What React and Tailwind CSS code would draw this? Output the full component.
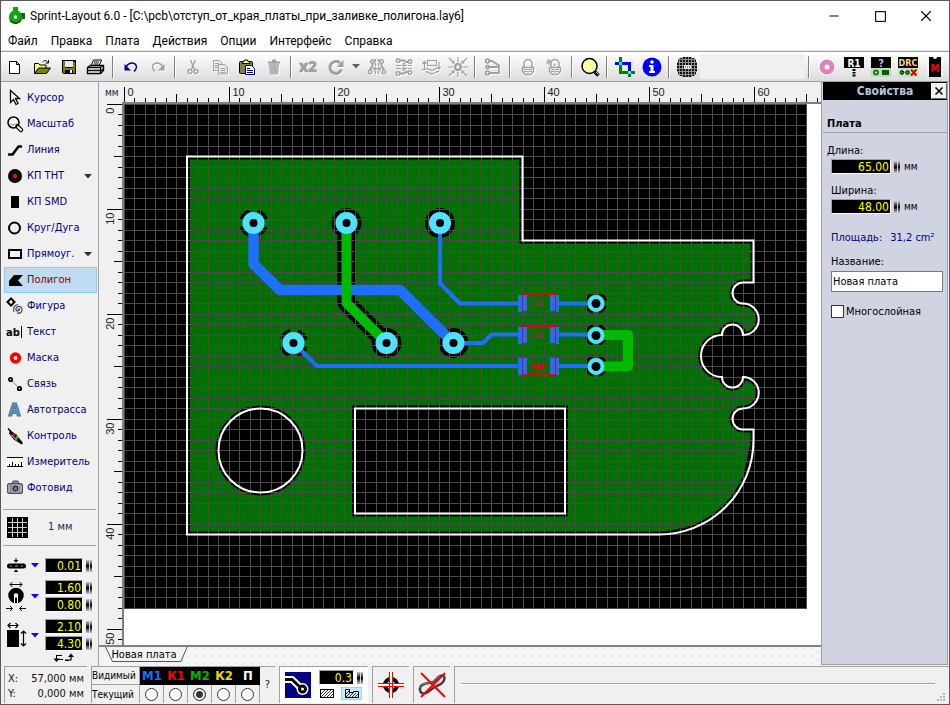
import React, { useState } from "react";
import { Minus, Square, X } from "lucide-react";

const STEP = 10.5; // pixels per mm on the board
const TAHOMA = "'DejaVu Sans Condensed', sans-serif";

const Svg = ({ children, w = 20, h = 20, className = "" }) => (
  <svg width={w} height={h} viewBox={`0 0 ${w} ${h}`} fill="none" className={`block shrink-0 ${className}`}>
    {children}
  </svg>
);

// Toolbar icons, 20x20
const toolIcons = {
  new: <path d="M4.5 4.5h7l3 3v9h-10zM11.5 4.5v3h3" stroke="#000" fill="#fff" />,
  open: (
    <>
      <path d="M2.500 16V6.500h4l1.500 1.500h6v3" fill="#ffff66" stroke="#000" />
      <path d="M2.500 16.500l4-5.500h12l-4 5.500z" fill="#808000" stroke="#000" />
      <path d="M10.500 5c2-2 4-2 5.500 0.500M16.500 3v3h-3" stroke="#000" />
    </>
  ),
  save: (
    <g shapeRendering="crispEdges">
      <path d="M3 3h14v14H4l-1-1z" fill="#000" />
      <path d="M4 4h2v7h8V5h2v11h-2v-3H6v3H4z" fill="#808000" />
      <path d="M6 4h8v6H6z" fill="#e8e8e8" />
      <path d="M11 13h2v3h-2z" fill="#fff" />
    </g>
  ),
  print: (
    <>
      <path d="M5 9l2.500-6h8L13 9" fill="#fff" stroke="#000" />
      <path d="M8 5h5M7.500 7h5" stroke="#000" />
      <path d="M1.500 10.500l3-2h13v5l-3 3h-13z" fill="#fff" stroke="#000" strokeWidth="1.400" />
      <path d="M1.500 10.500h13v6M14.500 10.500l3-2M2 13.500h12M14.500 14.500l3-3" stroke="#000" strokeWidth="1.300" />
      <path d="M8 12h4" stroke="#c8b400" />
    </>
  ),
  undo: (
    <>
      <path d="M5 10c3-5 8-5 10-2 1.500 3-0.500 5-2 6.500" stroke="#000080" strokeWidth="1.400" />
      <path d="M3.500 7v6.500h6.500z" fill="#000080" />
    </>
  ),
  redo: (
    <>
      <path d="M15 10c-3-5-8-5-10-2-1.500 3 0.500 5 2 6.500" stroke="#a0a0a0" strokeWidth="1.400" />
      <path d="M16.500 7v6.500h-6.500z" fill="#a0a0a0" />
    </>
  ),
  cut: (
    <g stroke="#a0a0a0" strokeWidth="1.400">
      <path d="M7.500 3l4 9.500M12.500 3L8.500 12.500" />
      <circle cx="7" cy="14.500" r="2" />
      <circle cx="13" cy="14.500" r="2" />
    </g>
  ),
  copy: (
    <g stroke="#a0a0a0" fill="#ececec">
      <path d="M3.500 3.500h6l2 2v8h-8zM5 6.500h4M5 8.500h4M5 10.500h3" />
      <path d="M8.500 7.500h6l3 2.500v7h-9zM10.500 11.500h5M10.500 13.500h5M10.500 15.500h5" />
    </g>
  ),
  paste: (
    <>
      <rect x="2.500" y="4.500" width="13" height="12" rx="1" fill="#808040" stroke="#000" />
      <path d="M5 6.500h8L11.500 4h-1V3h-3v1h-1z" fill="#ffff66" stroke="#000" />
      <path d="M8.500 8.500h6l3 3v6h-9z" fill="#fff" stroke="#000080" />
      <path d="M10 11.500h3M10 13.500h6M10 15.500h6" stroke="#000080" />
    </>
  ),
  trash: (
    <g stroke="#a0a0a0">
      <path d="M4 5.500h12M8 3.500h4" strokeWidth="2" />
      <path d="M5.500 7h9l-1 10h-7z" fill="#d4d4d4" />
      <path d="M8 8v8M10 8v8M12 8v8" strokeWidth="1.300" />
    </g>
  ),
  x2: (
    <text x="9" y="15" textAnchor="middle" fontSize="15" fontWeight="800" fill="#a0a0a0" stroke="#a0a0a0" strokeWidth="0.500" fontFamily="'Open Sans', sans-serif">
      x2
    </text>
  ),
  rotate: (
    <>
      <path d="M14 6a6 6 0 1 0 1.500 6.500" stroke="#a0a0a0" strokeWidth="3" />
      <path d="M17.500 3v7h-7z" fill="#a0a0a0" />
    </>
  ),
  mirrorH: (
    <g stroke="#a0a0a0" strokeWidth="1.400">
      <path d="M8.500 2v16M11.500 2v16" strokeDasharray="3 1" />
      <path d="M5.500 6.500v3l-2 2v2M14.500 6.500v3l2 2v2" strokeWidth="2" />
      <circle cx="5.500" cy="4.500" r="1.800" />
      <circle cx="14.500" cy="4.500" r="1.800" />
      <circle cx="3" cy="15" r="1.800" />
      <circle cx="17" cy="15" r="1.800" />
      <path d="M6 12h8M8 10l-2 2 2 2M12 10l2 2-2 2" strokeWidth="1" />
    </g>
  ),
  mirrorV: (
    <g stroke="#a0a0a0" strokeWidth="1.400">
      <path d="M2 8.500h16M2 11.500h16" strokeDasharray="5 1" strokeWidth="1" />
      <path d="M6 3.500h4l2 1.500h3M6 16.500h4l2-1.500h3" strokeWidth="2" />
      <circle cx="4" cy="3.500" r="1.800" />
      <circle cx="16" cy="4.500" r="1.800" />
      <circle cx="4" cy="16.500" r="1.800" />
      <circle cx="16" cy="15.500" r="1.800" />
      <path d="M10 6v8M8.500 7.500L10 6l1.500 1.500M8.500 12.500L10 14l1.500-1.500" strokeWidth="1" />
    </g>
  ),
  flip: (
    <g stroke="#a0a0a0" strokeWidth="1.200">
      <rect x="6.500" y="3.500" width="9" height="5" />
      <path d="M3.500 12.500V4.500M1.500 6.500l2-2 2 2M18 5v6.500M16 10l2 2 2-2" />
      <path d="M5 11l6 2.500 5-2.500M5 14.500l6 2.500 6-2.500" />
      <path d="M1 12.500h4M15 14.500h3" />
    </g>
  ),
  snap: (
    <g stroke="#a0a0a0" strokeWidth="1.200">
      <circle cx="10" cy="10" r="3" strokeWidth="2.400" />
      <path d="M10 0v5M10 15v5M0 10h5M15 10h5M1 1l5 5M19 1l-5 5M1 19l5-5M19 19l-5-5" />
      <path d="M3.500 6H6V3.500M16.500 6H14V3.500M3.500 14H6v2.500M16.500 14H14v2.500" />
    </g>
  ),
  connect: (
    <g stroke="#a0a0a0" strokeWidth="1.800">
      <circle cx="4.500" cy="4" r="1.800" />
      <circle cx="4.500" cy="10" r="1.500" />
      <circle cx="4.500" cy="16" r="1.800" />
      <path d="M6.500 4h2.500l7 4.500v7.500H6.500M6 10h10" />
    </g>
  ),
  lock: (
    <g stroke="#a0a0a0" strokeWidth="1.500">
      <path d="M6 10V6.500a4 4 0 0 1 8 0V10" />
      <path d="M4.500 10.500h11v4l-3 3h-5l-3-3z" />
      <path d="M6 12.500h3M11 12.500h3M6 14.500h3M11 14.500h3M10 12v4" strokeWidth="1" />
    </g>
  ),
  lockNew: (
    <g stroke="#a0a0a0" strokeWidth="1.500">
      <path d="M6 10V6.500a4 4 0 0 1 8 0V10M9.500 9V7" />
      <path d="M4.500 10.500h11v4l-3 3h-5l-3-3z" />
      <path d="M6 12.500h3M11 12.500h3M6 14.500h3M11 14.500h3M10 12v4" strokeWidth="1" />
      <path d="M1 5h6M4 2v6M2 3l4 4M6 3L2 7" strokeWidth="1" />
    </g>
  ),
  zoom: (
    <>
      <circle cx="9.500" cy="9" r="7.500" fill="#ffffa0" stroke="#000" strokeWidth="1.500" />
      <path d="M14.500 14.500l4 4" stroke="#000" strokeWidth="3.500" />
      <path d="M16 15l2.500 2.500" stroke="#fff" strokeWidth="0.800" />
    </>
  ),
  crop: (
    <g strokeWidth="3" shapeRendering="crispEdges">
      <path d="M5.500 0v15.500h9" stroke="#008000" />
      <path d="M0 6.500h14.500v9" stroke="#0000ff" />
      <path d="M14.500 14v6M16 15.500h4" stroke="#008000" />
      <path d="M4 6.500h3M13 15.500h3" stroke="#00ffff" />
    </g>
  ),
  info: (
    <>
      <circle cx="10" cy="10" r="9.500" fill="#0000ff" />
      <circle cx="10" cy="5" r="1.800" fill="#fff" />
      <path d="M7 8h4.500v6H13v2H7v-2h1.500v-4H7z" fill="#fff" />
    </>
  ),
  photo: (
    <g shapeRendering="crispEdges">
      <path d="M5 0h10v1h2v2h2v2h1v10h-1v2h-2v2h-2v1H5v-1H3v-2H1v-2H0V5h1V3h2V1h2z" fill="#101010" />
      <path
        d="M2.500 1v18M5.500 0v20M8.500 0v20M11.500 0v20M14.500 0v20M17.500 1v18M1 2.500h18M0 5.500h20M0 8.500h20M0 11.500h20M0 14.500h20M1 17.500h18"
        stroke="#909090"
      />
      <path d="M7 8h7v4H7z" fill="#e8e8e8" />
      <path d="M8 10h5" stroke="#888" strokeWidth="2" strokeDasharray="1 1" />
    </g>
  ),
  pad: (
    <>
      <circle cx="10" cy="10" r="8.500" fill="#fff" />
      <circle cx="10" cy="10" r="5" stroke="#e080c0" strokeWidth="5" />
    </>
  ),
  r1: (
    <>
      <rect x="0" y="0" width="20" height="11" fill="#000" />
      <text x="10" y="9.500" textAnchor="middle" fontSize="10" fontWeight="700" fill="#fff" fontFamily={TAHOMA}>
        R1
      </text>
      <path d="M8.500 12h3v2h-3zM8.500 15h3v1.500h-3zM8.500 17.500h3v2h-3z" fill="#000" />
    </>
  ),
  ask: (
    <>
      <rect width="20" height="20" fill="#b8dcb8" />
      <rect width="20" height="11" fill="#000" />
      <text x="10" y="9.500" textAnchor="middle" fontSize="11" fontWeight="700" fill="#a8c8ff" fontFamily={TAHOMA}>
        ?
      </text>
      <circle cx="5" cy="15.500" r="2" stroke="#006000" strokeWidth="1.500" />
      <rect x="11" y="13" width="7" height="5" fill="#006000" />
    </>
  ),
  drc: (
    <>
      <rect width="20" height="20" fill="#c8e0c0" />
      <rect width="20" height="11" fill="#000" />
      <text x="10" y="9" textAnchor="middle" fontSize="9" fontWeight="700" fill="#ffd890" fontFamily={TAHOMA}>
        DRC
      </text>
      <circle cx="4" cy="15.500" r="1.800" fill="#00c000" stroke="#000" />
      <circle cx="9.500" cy="15.500" r="1.800" fill="#00c000" stroke="#000" />
      <path d="M13 12.500l5.500 6M18.500 12.500l-5.500 6" stroke="#e00000" strokeWidth="2" />
    </>
  ),
  macro: (
    <>
      <path d="M3.500 0v20M16.500 0v20" stroke="#fff" strokeWidth="3" strokeDasharray="2 2" />
      <path d="M4 0h4a2 2 0 0 0 4 0h4v20H4z" fill="#000" />
      <text x="10" y="14.500" textAnchor="middle" fontSize="10" fontWeight="700" fill="#ff0000" fontFamily={TAHOMA}>
        M
      </text>
    </>
  ),
};

// null is a separator
const toolbar = [
  ["new", "Новый"],
  ["open", "Открыть"],
  ["save", "Сохранить"],
  ["print", "Печать"],
  null,
  ["undo", "Отменить"],
  ["redo", "Вернуть", true],
  null,
  ["cut", "Вырезать", true],
  ["copy", "Копировать", true],
  ["paste", "Вставить"],
  ["trash", "Удалить", true],
  null,
  ["x2", "Дублировать", true],
  ["rotate", "Повернуть", true],
  ["arrow", "Угол поворота", true],
  ["mirrorH", "Зеркально по горизонтали", true],
  ["mirrorV", "Зеркально по вертикали", true],
  ["flip", "На другую сторону", true],
  ["snap", "Привязка к сетке", true],
  null,
  ["connect", "Соединения", true],
  null,
  ["lock", "Группировать", true],
  ["lockNew", "Разгруппировать", true],
  null,
  ["zoom", "Масштаб"],
  null,
  ["crop", "Шаблон"],
  ["info", "Информация"],
  null,
  ["photo", "Прозрачность"],
];

const rightTools = [
  ["pad", "Металлизация"],
  ["r1", "Компоненты"],
  ["ask", "Свойства"],
  ["drc", "Проверка DRC"],
  ["macro", "Макросы"],
];

// Left panel tools
const tools = [
  ["Курсор", <path d="M5.500 2.500v12l3-3 2.500 5 2-1-2.500-5h4z" fill="#fff" stroke="#000" strokeWidth="1.300" />],
  [
    "Масштаб",
    <>
      <circle cx="8.500" cy="8.500" r="5.500" fill="#f8f8f8" stroke="#000" strokeWidth="1.500" />
      <path d="M5 9.500c2 2 5 2 7 0" stroke="#aaa" strokeWidth="1.500" />
      <path d="M12.500 12.500l3.500 3.500" stroke="#000" strokeWidth="4.500" strokeLinecap="round" />
      <path d="M13 13l3 3" stroke="#fff" strokeWidth="2" strokeLinecap="round" />
    </>,
  ],
  ["Линия", <path d="M4 14.500h3.500l6-8H16" stroke="#000" strokeWidth="2.500" strokeLinecap="round" strokeLinejoin="round" />],
  [
    "КП THT",
    <>
      <circle cx="10" cy="10" r="7" fill="#000" />
      <circle cx="10" cy="10" r="2.200" fill="#f00" />
    </>,
    true,
  ],
  ["КП SMD", <rect x="6" y="4" width="8" height="12" fill="#000" />],
  ["Круг/Дуга", <circle cx="9.500" cy="10" r="5.500" stroke="#000" strokeWidth="2" />],
  ["Прямоуг.", <rect x="4" y="6" width="12" height="8" stroke="#000" strokeWidth="2" shapeRendering="crispEdges" />, true],
  ["Полигон", <path d="M4 16v-5l5-6h9l-5 5.500 5 5.500z" fill="#000" />],
  [
    "Фигура",
    <>
      <path d="M6 2.500l3.500 3.500L6 9.500 2.500 6z" fill="#fff" stroke="#000" strokeWidth="2" />
      <path
        d="M13 13.500c0-1 1.500-1 1.500 0s-2 2-3 1-1-3.500 1.500-4 4.500 1.500 4 4-3 3-5 2.500M9 16c-1-3-0.500-7 4-7.500"
        stroke="#3c3c50"
        strokeWidth="1.200"
      />
    </>,
  ],
  [
    "Текст",
    <>
      <text x="8" y="14" textAnchor="middle" fontSize="11" fontWeight="700" fill="#000" fontFamily={TAHOMA}>
        ab
      </text>
      <path d="M16.500 4v12" stroke="#000" />
    </>,
  ],
  ["Маска", <circle cx="10.500" cy="10" r="3.800" fill="#fff" stroke="#f00" strokeWidth="3.800" />],
  [
    "Связь",
    <>
      <path d="M5.500 5.500l9 9" stroke="#888" />
      <circle cx="5.500" cy="5.500" r="1.700" fill="#fff" stroke="#000" strokeWidth="1.800" />
      <circle cx="14.500" cy="14.500" r="1.700" fill="#fff" stroke="#000" strokeWidth="1.800" />
    </>,
  ],
  [
    "Автотрасса",
    <text x="9.500" y="16" textAnchor="middle" fontSize="17" fontWeight="700" fill="#5f9bc4" stroke="#4d7a9c" strokeWidth="1.200" fontFamily={TAHOMA}>
      A
    </text>,
  ],
  [
    "Контроль",
    <>
      <path d="M3 2.500l3 3" stroke="#000" strokeWidth="1.500" />
      <path d="M5.500 6l5 3.500 6 7.500-7-4.500-4-5z" fill="#000" stroke="#000" strokeWidth="2.500" strokeLinejoin="round" />
      <path d="M6 8.500l6 6" stroke="#fff" />
      <circle cx="9" cy="8.500" r="1.400" fill="#f00" />
      <circle cx="12" cy="11.500" r="1.400" fill="#0d0" />
    </>,
  ],
  [
    "Измеритель",
    <g shapeRendering="crispEdges">
      <rect x="2" y="5" width="16" height="10" fill="#fff" />
      <path d="M2 5.500h16M2 14.500h16M4.500 12v2M7.500 10v4M10.500 12v2M13.500 12v2M16.500 10v4" stroke="#000" />
    </g>,
  ],
  [
    "Фотовид",
    <>
      <path d="M7 6l1-3h5l1 3" fill="#8a8f96" stroke="#555" />
      <rect x="2.500" y="5.500" width="15" height="10" rx="1.500" fill="#858b93" stroke="#4a4e55" />
      <path d="M4 7v7M16 7v7" stroke="#b8b0a0" strokeWidth="1.500" />
      <circle cx="10.500" cy="10.500" r="3.800" fill="#30343c" stroke="#c8ccd4" />
      <circle cx="10.500" cy="10.500" r="1.500" fill="#6a90c0" />
    </>,
  ],
];

const layers = [
  ["М1", "text-[#1e6eff]"],
  ["К1", "text-[#ff0000]"],
  ["М2", "text-[#00b400]"],
  ["К2", "text-[#e6dc00]"],
  ["П", "text-white"],
];

const Sep = () => <span className="mx-[3px] h-[22px] w-0.5 shrink-0 border-l border-[#808080] bg-white" />;

const Down = ({ color = "#333" }) => (
  <Svg w={8} h={5}>
    <path d="M0 0h8L4 4.500z" fill={color} />
  </Svg>
);

const Grip = () => (
  <Svg w={6} h={12}>
    <linearGradient id="grip" x1="0" y1="0" x2="0" y2="1">
      <stop offset="0" stopColor="#c8c8c8" />
      <stop offset="0.500" stopColor="#000" />
      <stop offset="1" stopColor="#c8c8c8" />
    </linearGradient>
    <rect x="0" y="0" width="3" height="12" fill="url(#grip)" />
    <rect x="3" y="0" width="1" height="12" fill="#d8d8e0" />
    <rect x="4" y="0" width="2" height="12" fill="url(#grip)" />
  </Svg>
);

const NumberField = ({ label, id, value, className = "w-[38px]" }) => (
  <div className="flex items-center gap-[3px]">
    <input
      id={id}
      aria-label={label}
      defaultValue={value}
      className={`h-[15px] border border-[#a0a0a0] border-r-white border-b-white bg-black pr-px text-right text-xs leading-3 text-[#ffff00] outline-none ${className}`}
    />
    <Grip />
  </div>
);

const ToolButton = ({ id, label, disabled }) => (
  <button
    type="button"
    aria-label={label}
    title={label}
    disabled={disabled}
    className={`flex h-7 shrink-0 items-center justify-center ${id === "arrow" ? "w-[14px]" : "w-[27px]"}`}
  >
    {id === "arrow" ? <Down color="#606060" /> : <Svg className={disabled ? "drop-shadow-[1px_1px_0_white]" : ""}>{toolIcons[id]}</Svg>}
  </button>
);

const marks = (count) => Array.from({ length: count }, (_, i) => ({ i, pos: Math.floor(i * STEP) + 0.5 }));
const tickSize = (i) => (i % 10 === 0 ? 15 : i % 5 === 0 ? 8 : 4);

function TopRuler() {
  return (
    <svg width="696" height="20" className="block" fontSize="11" fontFamily="'Liberation Sans', sans-serif">
      {marks(67).map(({ i, pos }) => (
        <g key={i}>
          <path d={`M${pos} ${20 - tickSize(i)}V20`} stroke="#000" />
          {i % 10 === 0 && (
            <text x={pos + 3} y="14" fill="#1a1a1a">
              {i}
            </text>
          )}
        </g>
      ))}
    </svg>
  );
}

function SideRuler() {
  return (
    <svg width="23" height="541" className="block" fontSize="11" fontFamily="'Liberation Sans', sans-serif">
      {marks(52).map(({ i, pos }) => (
        <g key={i}>
          <path d={`M${23 - tickSize(i)} ${pos}H23`} stroke="#000" />
          {i % 10 === 0 && (
            <text transform={`translate(15 ${pos + 3}) rotate(-90)`} textAnchor="end" fill="#1a1a1a">
              {i}
            </text>
          )}
        </g>
      ))}
    </svg>
  );
}

// Board outline, origin is the top left corner of the work area
const outline =
  "M63 52.500H398.500V136.500H629.500V178.500H619a10.500 10.500 0 0 0 0 21a15.750 15.750 0 0 1 0 31.500a10.500 10.500 0 0 0 -21 0a21 21 0 0 0 0 42a10.500 10.500 0 0 0 21 0a15.750 15.750 0 0 1 0 31.500a10.500 10.500 0 0 0 0 21H629.500V336a94.500 94.500 0 0 1 -94.500 94.500H63Z";
const cutouts = "M231 304.500H441V409.500H231ZM94.500 346.500a42 42 0 1 0 84 0a42 42 0 1 0 -84 0Z";

const bigPads = [
  [129.5, 119, true],
  [222.5, 119],
  [316, 119],
  [169.5, 239, true],
  [262.5, 239],
  [329.5, 239],
];
const smallPads = [199, 231, 262];

function Board() {
  const grid =
    marks(66)
      .map(({ pos }) => `M${pos} 0V505`)
      .join("") +
    marks(49)
      .map(({ pos }) => `M0 ${pos}H683`)
      .join("");

  return (
    <svg width="683" height="505" viewBox="0 0 683 505" fill="none" className="block">
      <clipPath id="copper">
        <path d={outline + cutouts} clipRule="evenodd" />
      </clipPath>
      <rect width="683" height="505" fill="#000" />
      <path d={outline + cutouts} fill="#007000" fillRule="evenodd" />

      {/* gap between copper and the board edge */}
      <path d={outline + cutouts} stroke="#000" strokeWidth="6" />
      <path d="M627 336L619 373L609 394L590 410L566 423L535 428V431H566L604 408L624 380L630 336Z" fill="#000" />

      {/* clearance around pads */}
      <path d="M222.500 119V199L262.500 239" stroke="#000" strokeWidth="18" strokeLinejoin="round" />
      {bigPads.map(([x, y, thermal]) => (
        <circle
          key={`${x}-${y}`}
          cx={x}
          cy={y}
          r="13"
          stroke="#000"
          strokeWidth={thermal ? 3 : 4}
          strokeDasharray={thermal ? "12.420 8" : undefined}
          strokeDashoffset="-4"
        />
      ))}
      {smallPads.map((y) => (
        <circle key={y} cx="472" cy={y} r="10" stroke="#000" strokeWidth="2.500" strokeDasharray="9.700 6" strokeDashoffset="-3" />
      ))}

      <path d={grid} stroke="#4b4b4b" shapeRendering="crispEdges" />
      <path d={grid} stroke="#524552" shapeRendering="crispEdges" clipPath="url(#copper)" />

      {/* tracks */}
      <path d="M129.500 119V160L156 186H276L329.500 239" stroke="#1e6eff" strokeWidth="10.500" strokeLinejoin="round" />
      <path
        d="M316 119V179.500L336 199.500H472M329.500 239H359L367.500 230.500H472M169.500 239L193 262H472"
        stroke="#1e6eff"
        strokeWidth="4"
        strokeLinejoin="round"
      />
      <path d="M222.500 119V199L262.500 239M472 231H504V262.500H472" stroke="#00b900" strokeWidth="10" strokeLinejoin="round" />

      {/* resistors */}
      {smallPads.map((y) => (
        <g key={y}>
          <rect x="394" y={y - 8} width="9" height="17" fill="#1e6eff" />
          <rect x="426" y={y - 8} width="9" height="17" fill="#1e6eff" />
          <rect x="403" y={y - 8} width="23" height="17" fill="#007000" />
          <path d={`M408.500 ${y - 8}v17M419.500 ${y - 8}v17`} stroke="#524552" />
          <rect x="398.500" y={y - 8.5} width="33" height="17" stroke="#e60000" />
          <rect x="410.500" y={y - 1.5} width="8" height="4" fill="#524552" stroke="#e60000" />
          <path d={`M406 ${y + 0.5}h4M419 ${y + 0.5}h4`} stroke="#e60000" />
        </g>
      ))}

      {bigPads.map(([x, y]) => (
        <circle key={`${x}-${y}`} cx={x} cy={y} r="7.500" fill="#000" stroke="#50e1ff" strokeWidth="7" />
      ))}
      {smallPads.map((y) => (
        <circle key={y} cx="472" cy={y + 0.5} r="6.500" fill="#000" stroke="#50e1ff" strokeWidth="4" />
      ))}

      <path d={outline + cutouts} stroke="#fff" strokeWidth="2" />
    </svg>
  );
}

function SidePanel() {
  const [active, setActive] = useState("Полигон");

  return (
    <aside className="flex w-[98px] shrink-0 flex-col border-r border-[#a0a0a0] pt-[3px]">
      <div className="flex flex-col pr-px pl-[3px]">
        {tools.map(([name, icon, menu]) => (
          <button
            key={name}
            type="button"
            onClick={() => setActive(name)}
            className={`flex h-[26px] items-center gap-0.5 border text-[11px] ${
              active === name ? "border-[#90c8f6] bg-[#c0dcf3] text-[#800000]" : "border-transparent text-[#000080]"
            }`}
          >
            <Svg>{icon}</Svg>
            <span>{name}</span>
            {menu && (
              <span className="mr-1 ml-auto">
                <Down />
              </span>
            )}
          </button>
        ))}
      </div>

      <div className="mx-0.5 mt-2 flex h-[37px] items-center gap-5 border-y border-[#a0a0a0] pl-1 text-[11px] text-[#202850]">
        <Svg w={21} h={21}>
          <g shapeRendering="crispEdges">
            <rect width="21" height="21" fill="#000" />
            <path d="M5.500 1v19M10.500 1v19M15.500 1v19M1 5.500h19M1 10.500h19M1 15.500h19" stroke="#ccc" />
          </g>
        </Svg>
        <span>1 мм</span>
      </div>

      <div className="mt-3 flex flex-col gap-[7px] pl-[5px]">
        <div className="flex items-center">
          <Svg w={22} h={15}>
            <path d="M3.500 8h14" stroke="#000" strokeWidth="5" strokeLinecap="round" />
            <path d="M4 8h2M9 8h3M15 8h2" stroke="#999" />
            <path d="M7.500 2h5L10 4.500zM7.500 14h5L10 11.500zM9.500 0h1v3h-1z" fill="#000" />
          </Svg>
          <span className="mr-[6px] ml-[3px]">
            <Down color="#0000ff" />
          </span>
          <NumberField label="Ширина дорожки" value="0.01" />
        </div>
        <div className="flex items-center">
          <Svg w={22} h={32}>
            <path d="M4 4.500h12M6.500 2L4 4.500 6.500 7M13.500 2L16 4.500 13.500 7" stroke="#000" />
            <circle cx="10" cy="15.500" r="5" stroke="#000" strokeWidth="5.500" />
            <path d="M8.500 15v8M11.500 15v8" stroke="#fff" />
            <path d="M0 28.500h6M4 26l2.500 2.500L4 31M20 28.500h-6M16 26l-2.500 2.500L16 31" stroke="#000" />
          </Svg>
          <span className="mr-[6px] ml-[3px]">
            <Down color="#0000ff" />
          </span>
          <div className="flex flex-col gap-0.5">
            <NumberField label="Диаметр площадки" value="1.60" />
            <NumberField label="Диаметр отверстия" value="0.80" />
          </div>
        </div>
        <div className="flex items-center">
          <Svg w={22} h={32}>
            <path d="M2 6.500h10M4.500 4l-2.500 2.500L4.500 9M9.500 4l2.500 2.500L9.500 9" stroke="#000" strokeWidth="1.200" />
            <rect x="1" y="11" width="12" height="17" fill="#000" />
            <path d="M17.500 12v15M15 14.500l2.500-2.500 2.500 2.500M15 24.500l2.500 2.500 2.500-2.500" stroke="#000" strokeWidth="1.200" />
          </Svg>
          <span className="mr-[6px] ml-[3px]">
            <Down color="#0000ff" />
          </span>
          <div className="flex flex-col gap-0.5">
            <NumberField label="Ширина SMD" value="2.10" />
            <NumberField label="Высота SMD" value="4.30" />
          </div>
        </div>
      </div>
      <button type="button" aria-label="Поменять местами" className="ml-[52px] w-[22px]">
        <Svg w={22} h={12}>
          <path d="M10 8.500H3M3 4.500h6M12 9h6V5M12 9.500h4" stroke="#000" strokeWidth="1.200" />
          <path d="M0.500 7.500h6L3.500 11zM15 6h6L18 2.500z" fill="#000" />
          <path d="M3.500 4v4" stroke="#000" />
        </Svg>
      </button>
    </aside>
  );
}

function Properties() {
  return (
    <aside className="mb-px flex w-[127px] shrink-0 flex-col border border-t-0 border-[#a0a0a0] bg-[#d0d3e2] pl-px text-[11px]">
      <div className="flex h-[18px] items-center bg-black">
        <h2 className="flex-1 pl-4 text-center text-xs font-bold text-[#b8c4de]">Свойства</h2>
        <button
          type="button"
          aria-label="Закрыть панель"
          className="flex h-4 w-4 items-center justify-center border border-white border-r-[#696969] border-b-[#696969] bg-[#f0f0f0]"
        >
          <Svg w={8} h={8}>
            <path d="M0.500 0.500l7 7M7.500 0.500l-7 7" stroke="#000" strokeWidth="1.500" />
          </Svg>
        </button>
      </div>
      <h3 className="mt-[15px] border-b border-[#a0a0a0] pl-1 leading-[17px] font-bold">Плата</h3>
      <div className="flex flex-col pt-[9px] pl-1">
        <label htmlFor="board-w" className="leading-[17px]">
          Длина:
        </label>
        <div className="flex items-center gap-1 pl-1">
          <NumberField id="board-w" value="65.00" className="w-[60px]" />
          <span className="text-[10px]">мм</span>
        </div>
        <label htmlFor="board-h" className="mt-2 pl-1 leading-[17px]">
          Ширина:
        </label>
        <div className="flex items-center gap-1 pl-1">
          <NumberField id="board-h" value="48.00" className="w-[60px]" />
          <span className="text-[10px]">мм</span>
        </div>
        <div className="mt-4 flex gap-2 pl-1 leading-4 text-[#000080]">
          <span>Площадь:</span>
          <span>31,2 cm²</span>
        </div>
        <label htmlFor="board-name" className="mt-2 pl-1 leading-4">
          Название:
        </label>
        <input
          id="board-name"
          defaultValue="Новая плата"
          className="mt-px mr-1 ml-1 h-[21px] border border-[#7a7a7a] bg-white px-px outline-none"
        />
        <div className="mt-[13px] flex items-center gap-0.5 pl-1">
          <input id="multi" type="checkbox" className="size-[13px] shrink-0 appearance-none border border-[#333] bg-white checked:bg-[#333]" />
          <label htmlFor="multi" className="leading-[13px]">
            Многослойная
          </label>
        </div>
      </div>
    </aside>
  );
}

const Cell = ({ children, className = "" }) => <div className={`mr-1 flex shrink-0 border-t border-l border-[#a0a0a0] ${className}`}>{children}</div>;

function StatusBar() {
  const [layer, setLayer] = useState("М2");

  return (
    <footer className="flex h-[38px] shrink-0 pb-px pl-[3px] text-[11px]">
      <Cell className="w-[83px] flex-col justify-center px-[3px] pt-px leading-[15px] text-[#101010]">
        <div className="flex justify-between">
          <span>X:</span>
          <span>57,000 мм</span>
        </div>
        <div className="flex justify-between">
          <span>Y:</span>
          <span>0,000 мм</span>
        </div>
      </Cell>

      <Cell className="w-[184px]">
        <table className="h-full w-[168px] shrink-0 table-fixed border-separate border-spacing-0">
          <tbody>
            <tr className="h-[18px]">
              <th scope="row" className="w-12 border-r border-b border-[#a0a0a0] p-0 text-left text-[10px] font-normal">
                Видимый
              </th>
              {layers.map(([name, color]) => (
                <th key={name} scope="col" className={`w-6 bg-black p-0 text-center text-[13px] leading-4 font-bold ${color}`}>
                  {name}
                </th>
              ))}
            </tr>
            <tr>
              <th scope="row" className="border-r border-[#a0a0a0] p-0 text-left text-[10px] font-normal">
                Текущий
              </th>
              {layers.map(([name]) => (
                <td key={name} className="border-r border-[#a0a0a0] p-0">
                  <input
                    type="radio"
                    name="layer"
                    aria-label={name}
                    checked={layer === name}
                    onChange={() => setLayer(name)}
                    className="mx-auto block size-[13px] appearance-none rounded-full border border-[#333] bg-white checked:bg-[#333] checked:shadow-[inset_0_0_0_2px_white]"
                  />
                </td>
              ))}
            </tr>
          </tbody>
        </table>
        <button type="button" className="flex-1 text-[11px] text-[#202040]">
          ?
        </button>
      </Cell>

      <Cell className="w-[89px] items-center bg-white pl-[5px]">
        <Svg w={26} h={26}>
          <rect width="26" height="26" fill="#000080" />
          <path d="M0 7.500h7L17 17" stroke="#fff" strokeWidth="7" />
          <circle cx="17.500" cy="17" r="6" fill="#fff" />
          <path d="M0 7.500h7L17 17" stroke="#000" strokeWidth="3" />
          <circle cx="17.500" cy="17" r="3" fill="#fff" stroke="#000" strokeWidth="3" />
        </Svg>
        <div className="ml-2 flex flex-col gap-0.5">
          <NumberField label="Зазор" value="0.3" className="w-[35px]" />
          <div className="flex gap-1.5">
            <button type="button" aria-label="Сплошная заливка" className="flex h-[13px] w-4 items-center justify-center">
              <Svg w={14} h={9}>
                <rect x="0.500" y="0.500" width="13" height="8" fill="#fff" stroke="#000" />
                <path d="M1 5l4-4M1 8l7-7M4 8l7-7M7 8l6-6M10 8l3-3" stroke="#000" strokeWidth="0.800" />
              </Svg>
            </button>
            <button
              type="button"
              aria-label="Заливка по контуру"
              className="flex h-[13px] w-[21px] items-center justify-center border border-[#99d1ff] bg-[#cce8ff]"
            >
              <Svg w={14} h={9}>
                <path d="M0.500 0.500h4v3h4v-1h5v6h-13z" fill="#cce8ff" stroke="#000" />
                <path d="M1 5l3-3M1 8l5-5M4 8l4-4M7 8l4-4M10 8l3-3" stroke="#000" strokeWidth="0.800" />
              </Svg>
            </button>
          </div>
        </div>
      </Cell>

      <Cell className="w-[37px]">
        <button type="button" aria-label="Перекрестие" className="flex flex-1 items-center justify-center">
          <Svg w={28} h={28}>
            <circle cx="14" cy="14" r="6" stroke="#000" strokeWidth="4" />
            <g shapeRendering="crispEdges">
              <path d="M14 1v26M1 14h26" stroke="#fff" strokeWidth="2" />
              <path d="M12.500 1v26M15.500 1v26M1 12.500h26M1 15.500h26" stroke="#f00" />
              <path d="M13 14h2M14 13v2" stroke="#fff" strokeWidth="2" />
            </g>
          </Svg>
        </button>
      </Cell>
      <Cell className="w-[37px]">
        <button type="button" aria-label="Резинка" className="flex flex-1 items-center justify-center">
          <Svg w={28} h={28}>
            <path d="M2 19c-1-5 5-7 10-7s6-5 10-7 6 2 3 6-7 3-11 7-11 7-12 1z" stroke="#3a3a42" strokeWidth="2.400" />
            <path d="M2 17c1-4 5-5 9-5s6-4 11-7" stroke="#9a9aa2" strokeWidth="0.800" />
            <path d="M3 2l24 24M27 2L3 26" stroke="#f00" strokeWidth="2" />
          </Svg>
        </button>
      </Cell>
      <div className="flex min-w-0 flex-1 items-end border-t border-l border-[#a0a0a0] pl-1.5">
        <hr className="mb-[18px] flex-1 border-t border-b border-[#a0a0a0] border-b-white" />
        <Svg w={14} h={12}>
          <path d="M8 2h2v2H8zM8 5h2v2H8zM5 5h2v2H5zM2 8h2v2H2zM5 8h2v2H5zM8 8h2v2H8z" fill="#b8b8b8" />
        </Svg>
      </div>
    </footer>
  );
}

export default function App() {
  return (
    <div className="flex h-screen w-full flex-col overflow-hidden border border-[#585858] bg-[#f0f0f0] font-['DejaVu_Sans_Condensed','Liberation_Sans',sans-serif] text-black select-none">
      <header className="shrink-0 bg-white font-[Roboto,sans-serif] text-xs">
        <div className="flex h-[30px] items-center">
          <Svg w={18} h={18} className="mr-1 ml-[7px]">
            <path d="M10 6h7v6h-7z" fill="#0a6a0a" />
            <path d="M5 0h5v7H5z" fill="#18a018" />
            <circle cx="7.500" cy="10" r="4.200" stroke="#12a512" strokeWidth="5" fill="#fff" />
            <path d="M2 13.500c3 4 9 3.500 11-1" stroke="#064d06" strokeWidth="1.500" />
          </Svg>
          <h1 className="flex-1">Sprint-Layout 6.0 - [C:\pcb\отступ_от_края_платы_при_заливке_полигона.lay6]</h1>
          <button type="button" aria-label="Свернуть" className="flex h-full w-[46px] items-center justify-center">
            <Minus size={14} strokeWidth={2} />
          </button>
          <button type="button" aria-label="Развернуть" className="flex h-full w-[46px] items-center justify-center">
            <Square size={13} strokeWidth={2} strokeLinejoin="miter" className="[&>rect]:[rx:0]" />
          </button>
          <button type="button" aria-label="Закрыть" className="flex h-full w-[46px] items-center justify-center">
            <X size={18} strokeWidth={1.5} />
          </button>
        </div>
        <nav className="flex h-5 items-center gap-[13px] border-b border-[#e8e8e8] pl-[7px]">
          {["Файл", "Правка", "Плата", "Действия", "Опции", "Интерфейс", "Справка"].map((item) => (
            <a key={item} href="#">
              {item}
            </a>
          ))}
        </nav>
      </header>

      <div className="flex h-[31px] shrink-0 items-center border-y border-[#a0a0a0] bg-linear-to-b from-white to-[#dcdcdc] pr-px">
        {toolbar.map((t, i) => (t ? <ToolButton key={t[0]} id={t[0]} label={t[1]} disabled={t[2]} /> : <Sep key={i} />))}
        <span className="h-[25px] flex-1 bg-[#f0f0f0]" />
        <Sep />
        {rightTools.map(([id, label]) => (
          <ToolButton key={id} id={id} label={label} />
        ))}
      </div>

      <main className="flex min-h-0 flex-1 pr-px">
        <SidePanel />
        <div className="flex min-w-0 flex-1 flex-col">
          <div className="flex h-5 shrink-0 overflow-hidden">
            <span className="w-[25px] shrink-0 pl-1.5 text-[10px] leading-[22px] text-[#202040]">мм</span>
            <TopRuler />
          </div>
          <div className="flex min-h-0 flex-1">
            <div className="w-[23px] shrink-0 overflow-hidden pt-0.5">
              <SideRuler />
            </div>
            <div className="min-w-0 flex-1 overflow-hidden border-t-2 border-l-2 border-[#808080] bg-white">
              <Board />
            </div>
          </div>
          <div className="h-[21px] shrink-0 border-t-2 border-[#808080] bg-[repeating-conic-gradient(#ffffff_0_25%,#ebebeb_0_50%)] bg-[length:2px_2px]">
            <button type="button" className="relative flex h-4 w-[90px] items-center justify-center text-[11px]">
              <Svg w={90} h={16} className="absolute top-0 left-0">
                <path d="M6 -1L13.500 14.500H82L88.500 -1" fill="#f4f4f4" stroke="#555" />
              </Svg>
              <span className="relative leading-[14px]">Новая плата</span>
            </button>
          </div>
        </div>
        <Properties />
      </main>

      <StatusBar />
    </div>
  );
}
